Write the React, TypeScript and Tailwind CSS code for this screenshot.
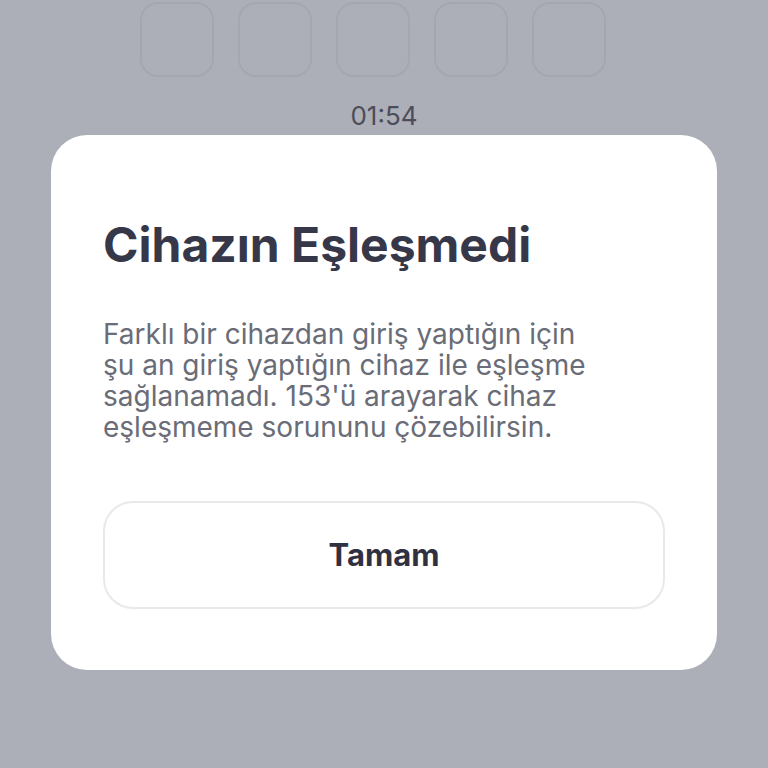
import React from 'react';

const bodyLines = [
  'Farklı bir cihazdan giriş yaptığın için',
  'şu an giriş yaptığın cihaz ile eşleşme',
  "sağlanamadı. 153'ü arayarak cihaz",
  'eşleşmeme sorununu çözebilirsin.',
];

export default function App() {
  return (
    <div
      className="w-full h-[768px] overflow-hidden bg-[#adafb8] flex flex-col items-center"
      style={{ fontFamily: 'Inter, "Noto Sans", sans-serif' }}
    >
      {/* code inputs behind the overlay */}
      <div className="flex gap-[24px] mt-[2px] mr-[22px]">
        {[0, 1, 2, 3, 4].map((i) => (
          <div key={i} className="w-[74px] h-[75px] rounded-[18px] border-2 border-[#a4a6b0]" />
        ))}
      </div>

      <div className="mt-[24px] h-[30px] text-[26px] leading-[30px] text-[#4b4d5a]">01:54</div>

      <div className="mt-[4px] w-[666px] bg-white rounded-[36px] px-[52px] pt-[82px] pb-[61px]">
        <h1 className="text-[48px] leading-[56px] font-bold text-[#363849]">Cihazın Eşleşmedi</h1>

        <p className="mt-[46px] text-[28px] leading-[31px] text-[#6a6c77]">
          {bodyLines.map((l) => (
            <span key={l} className="block whitespace-nowrap">{l}</span>
          ))}
        </p>

        <button className="mt-[58px] w-full h-[108px] rounded-[30px] border-2 border-[#e9e9ec] flex items-center justify-center text-[31px] font-bold text-[#2f3142]">
          Tamam
        </button>
      </div>
    </div>
  );
}
